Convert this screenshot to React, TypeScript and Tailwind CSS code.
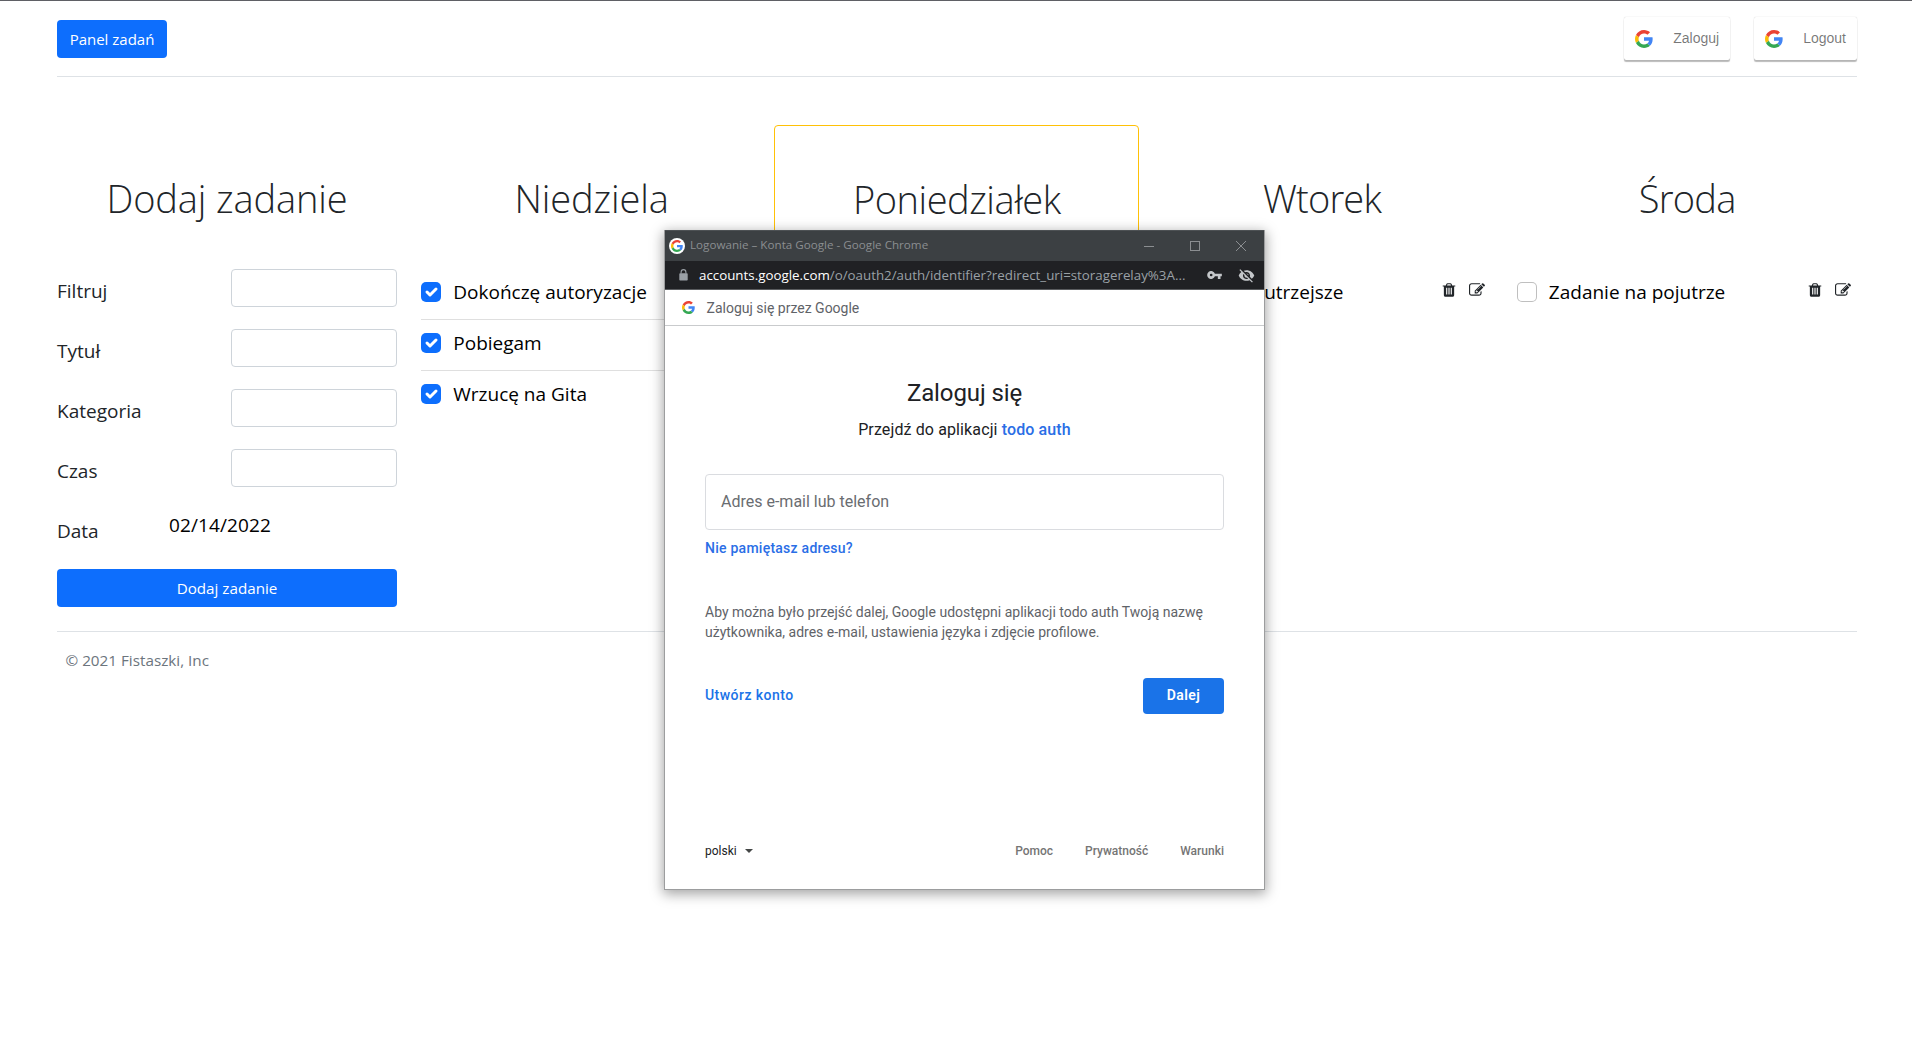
import React from "react";

const TRASH =
  "M704 1376v-704q0-14-9-23t-23-9h-64q-14 0-23 9t-9 23v704q0 14 9 23t23 9h64q14 0 23-9t9-23zm256 0v-704q0-14-9-23t-23-9h-64q-14 0-23 9t-9 23v704q0 14 9 23t23 9h64q14 0 23-9t9-23zm256 0v-704q0-14-9-23t-23-9h-64q-14 0-23 9t-9 23v704q0 14 9 23t23 9h64q14 0 23-9t9-23zm-544-992h448l-48-117q-7-9-17-11h-317q-10 2-17 11zm928 32v64q0 14-9 23t-23 9h-96v948q0 83-47 143.5t-113 60.5h-832q-66 0-113-58.5t-47-141.5v-952h-96q-14 0-23-9t-9-23v-64q0-14 9-23t23-9h309l70-167q15-37 54-63t79-26h320q40 0 79 26t54 63l70 167h309q14 0 23 9t9 23z";
const EDIT =
  "M888 1184l116-116-152-152-116 116v56h96v96h56zm440-720q-16-16-33 1l-350 350q-17 17-1 33t33-1l350-350q17-17 1-33zm80 594v190q0 119-84.5 203.5t-203.5 84.5h-832q-119 0-203.5-84.5t-84.5-203.5v-832q0-119 84.5-203.5t203.5-84.5h832q63 0 117 25 15 7 18 23 3 17-9 29l-49 49q-14 14-32 8-23-6-45-6h-832q-66 0-113 47t-47 113v832q0 66 47 113t113 47h832q66 0 113-47t47-113v-126q0-13 9-22l64-64q15-15 35-7t20 29zm-96-738l288 288-672 672h-288v-288zm444 132l-92 92-288-288 92-92q28-28 68-28t68 28l152 152q28 28 28 68t-28 68z";

function GlyphIcon({ d }: { d: string }) {
  return (
    <svg viewBox="0 0 1792 1792" className="h-4 w-4" fill="#212529">
      <path d={d} />
    </svg>
  );
}

function GoogleG({ className }: { className: string }) {
  return (
    <svg viewBox="0 0 18 18" className={className}>
      <path fill="#EA4335" d="M9 3.48c1.69 0 2.83.73 3.48 1.34l2.54-2.48C13.46.89 11.43 0 9 0 5.48 0 2.44 2.02.96 4.96l2.91 2.26C4.6 5.05 6.62 3.48 9 3.48z" />
      <path fill="#4285F4" d="M17.64 9.2c0-.74-.06-1.28-.19-1.84H9v3.34h4.96c-.1.83-.64 2.08-1.84 2.92l2.84 2.2c1.7-1.57 2.68-3.88 2.68-6.62z" />
      <path fill="#FBBC05" d="M3.88 10.78A5.54 5.54 0 0 1 3.58 9c0-.62.11-1.22.29-1.78L.96 4.96A9.008 9.008 0 0 0 0 9c0 1.45.35 2.82.96 4.04l2.92-2.26z" />
      <path fill="#34A853" d="M9 18c2.43 0 4.47-.8 5.96-2.18l-2.84-2.2c-.76.53-1.78.9-3.12.9-2.38 0-4.4-1.57-5.12-3.74L.97 13.04C2.45 15.98 5.48 18 9 18z" />
    </svg>
  );
}

function GoogleButton({ label }: { label: string }) {
  return (
    <button className="flex h-[43px] items-center rounded-[2px] bg-white pr-[11px] pl-[11px] font-['Liberation_Sans',sans-serif] text-[14px] text-black/54 shadow-[0_2px_1px_0_rgba(0,0,0,0.27),0_0_1px_0_rgba(0,0,0,0.24)]">
      <GoogleG className="mr-[20px] h-[18px] w-[18px]" />
      {label}
    </button>
  );
}

function Task({ label, done, last, actions }: { label: string; done?: boolean; last?: boolean; actions?: boolean }) {
  return (
    <div className={last ? "flex h-[51px] items-start" : "flex h-[51px] items-start border-b border-[#dfdfdf]"}>
      {done ? (
        <span className="mt-[13px] h-5 w-5 shrink-0 rounded-[5px] bg-[#0d6efd]">
          <svg viewBox="0 0 20 20" fill="none" stroke="#fff" strokeWidth="3" strokeLinecap="round" strokeLinejoin="round">
            <path d="M6 10l3 3l6-6" />
          </svg>
        </span>
      ) : (
        <span className="mt-[13px] h-5 w-5 shrink-0 rounded-[5px] border border-black/25 bg-white" />
      )}
      <span className="ml-[12.3px] text-[19px] leading-[47px] whitespace-nowrap text-black">{label}</span>
      {actions && (
        <span className="mt-[13px] mr-[7.2px] ml-auto flex gap-3">
          <GlyphIcon d={TRASH} />
          <GlyphIcon d={EDIT} />
        </span>
      )}
    </div>
  );
}

type ColumnProps = { title: string; width?: string; tracking?: string; highlight?: boolean; children?: React.ReactNode };

function Column({ title, width = "w-[365.2px]", tracking = "", highlight, children }: ColumnProps) {
  const frame = highlight ? "rounded border border-[#ffc107] px-[11px] " : "px-3 ";
  return (
    <section className={"h-[482px] shrink-0 pt-[49px] " + frame + width}>
      <h2 className={"mb-[47px] text-center text-[38px] leading-[48px] font-light text-[#212529] " + tracking}>{title}</h2>
      {children}
    </section>
  );
}

function Popup() {
  return (
    <div className="absolute top-[230px] left-[664px] flex h-[660px] w-[601px] flex-col border border-t-0 border-[#9c9d9e] bg-white shadow-[0_3px_12px_1px_rgba(0,0,0,0.36)]">
      <div className="flex h-[31px] shrink-0 items-center border-t border-[#4d5154] bg-[#3c4043] pr-[18px] pl-1">
        <span className="flex h-4 w-4 items-center justify-center rounded-full bg-white">
          <GoogleG className="h-3 w-3" />
        </span>
        <span className="ml-[5px] pb-0.5 text-[11.65px] text-[#8b8e91]">Logowanie – Konta Google - Google Chrome</span>
        <span className="ml-auto flex items-center gap-[36px]">
          <span className="h-px w-[10px] bg-[#8b8e91]" />
          <span className="h-[10px] w-[10px] border border-[#8b8e91]" />
          <svg viewBox="0 0 10 10" className="h-[10px] w-[10px]" stroke="#8b8e91" strokeWidth="1">
            <path d="M0 0L10 10M10 0L0 10" />
          </svg>
        </span>
      </div>
      <div className="flex h-[29px] shrink-0 items-center border-b border-[#5a5c5f] bg-[#202124] pr-[9px] pl-[13.5px]">
        <svg viewBox="0 0 9 12" className="h-3 w-[9px]">
          <rect x="0.3" y="4.2" width="8.4" height="7.3" rx="0.8" fill="#9aa0a6" />
          <path d="M2.1 4.5V3a2.4 2.4 0 0 1 4.8 0v1.5" fill="none" stroke="#9aa0a6" strokeWidth="1.1" />
        </svg>
        <span className="ml-[11.5px] text-[13.34px] whitespace-nowrap text-[#9aa0a6]">
          <span className="text-white">accounts.google.com</span>
          /o/oauth2/auth/identifier?redirect_uri=storagerelay%3A...
        </span>
        <svg viewBox="0 0 22 12" className="ml-auto h-2 w-[15px]" fill="#c4c7ca">
          <path d="M11.65 4A6 6 0 1 0 11.65 8H16v4h4V8h2V4H11.65zM6 8a2 2 0 1 1 0-4 2 2 0 0 1 0 4z" />
        </svg>
        <svg viewBox="0 0 24 24" className="ml-4 h-[17px] w-[17px]" fill="#c4c7ca">
          <path d="M12 7c2.76 0 5 2.24 5 5 0 .65-.13 1.26-.36 1.83l2.92 2.92c1.51-1.26 2.7-2.89 3.43-4.75-1.73-4.39-6-7.5-11-7.5-1.4 0-2.74.25-3.98.7l2.16 2.16C10.74 7.13 11.35 7 12 7zM2 4.27l2.28 2.28.46.46A11.8 11.8 0 0 0 1 12c1.73 4.39 6 7.5 11 7.5 1.55 0 3.03-.3 4.38-.84l.42.42L19.73 22 21 20.73 3.27 3 2 4.27zM7.53 9.8l1.55 1.55c-.05.21-.08.43-.08.65 0 1.66 1.34 3 3 3 .22 0 .44-.03.65-.08l1.55 1.55c-.67.33-1.41.53-2.2.53-2.76 0-5-2.24-5-5 0-.79.2-1.53.53-2.2zm4.31-.78l3.15 3.15.02-.16c0-1.66-1.34-3-3-3l-.17.01z" />
        </svg>
      </div>
      <div className="flex h-9 shrink-0 items-center border-b border-[#c9cbcd] pl-[16.5px] font-[Roboto,sans-serif] text-[14px] text-[#5f6368]">
        <GoogleG className="mr-[12px] h-[13px] w-[13px]" />
        <span className="pt-px">Zaloguj się przez Google</span>
      </div>
      <div className="flex flex-1 flex-col px-10 pt-[51px] pb-7 font-[Roboto,sans-serif]">
        <h1 className="text-center text-[24px] leading-8 tracking-[-0.1px] text-[#202124]">Zaloguj się</h1>
        <p className="mt-2 text-center text-[16px] leading-[25px] tracking-[0.12px] text-[#202124]">
          Przejdź do aplikacji <span className="font-medium text-[#2a6ee6]">todo auth</span>
        </p>
        <div className="mt-8 flex h-14 items-center rounded border border-[#dadce0] pl-[15px] text-[16px] text-[#6a6d71]">
          Adres e-mail lub telefon
        </div>
        <a className="mt-2 text-[14px] leading-5 font-medium tracking-[0.25px] text-[#2a6ee6]">Nie pamiętasz adresu?</a>
        <p className="mt-11 text-[14px] leading-5 text-[#5f6368]">
          Aby można było przejść dalej, Google udostępni aplikacji todo auth Twoją nazwę użytkownika, adres e-mail, ustawienia języka i zdjęcie profilowe.
        </p>
        <div className="mt-9 flex h-9 items-center justify-between">
          <a className="pb-0.5 text-[14px] font-medium tracking-[0.46px] text-[#1a73e8]">Utwórz konto</a>
          <button className="h-9 w-[81px] rounded bg-[#1a73e8] pb-0.5 text-[14px] font-semibold tracking-[0.4px] text-white">Dalej</button>
        </div>
        <div className="mt-auto flex items-center text-[12px] leading-5 text-[#757575]">
          <span className="text-[#202124]">polski</span>
          <span className="ml-2 h-0 w-0 border-x-4 border-t-4 border-x-transparent border-t-[#444746]" />
          <span className="ml-auto font-medium">Pomoc</span>
          <span className="ml-8 font-medium">Prywatność</span>
          <span className="ml-8 font-medium">Warunki</span>
        </div>
      </div>
    </div>
  );
}

export default function App() {
  return (
    <div className="relative h-[1038px] w-[1912px] overflow-hidden border-t border-[#5f6065] bg-white font-['Open_Sans',sans-serif] text-[#212529]">
      <div className="ml-[57px] w-[1800px]">
        <header className="flex h-[76px] items-start justify-between border-b border-[#dee2e6]">
          <button className="mt-[19px] h-[38px] w-[110px] rounded bg-[#0d6efd] text-[15px] text-white">Panel zadań</button>
          <div className="mt-4 flex gap-6">
            <GoogleButton label="Zaloguj" />
            <GoogleButton label="Logout" />
          </div>
        </header>

        <main className="-mx-3 mt-12 flex">
          <Column title="Dodaj zadanie" width="w-[364px]" tracking="tracking-[-0.12px]">
            {["Filtruj", "Tytuł", "Kategoria", "Czas"].map((name) => (
              <div key={name} className="flex h-[60px] items-start justify-between text-[19px] leading-[45px]">
                <label>{name}</label>
                <input className="h-[38px] w-[166px] rounded border border-[#ced4da] bg-white" />
              </div>
            ))}
            <div className="flex h-[60px] items-start text-[19px] leading-[45px]">
              <label className="w-[112px]">Data</label>
              <span className="leading-[33px] tracking-[0.1px] text-black">02/14/2022</span>
            </div>
            <button className="h-[38px] w-full rounded bg-[#0d6efd] text-[15.2px] text-white">Dodaj zadanie</button>
          </Column>
          <Column title="Niedziela" tracking="tracking-[-0.1px]">
            <Task label="Dokończę autoryzacje" done />
            <Task label="Pobiegam" done />
            <Task label="Wrzucę na Gita" done last />
          </Column>
          <Column title="Poniedziałek" tracking="tracking-[-0.45px]" highlight />
          <Column title="Wtorek" tracking="tracking-[-0.8px]">
            <Task label="Zadanie jutrzejsze" last actions />
          </Column>
          <Column title="Środa" tracking="tracking-[-0.7px]">
            <Task label="Zadanie na pojutrze" last actions />
          </Column>
        </main>

        <footer className="mt-6 border-t border-[#dee2e6] pl-[8.5px] text-[15.25px] leading-[56px] text-[#6c757d]">© 2021 Fistaszki, Inc</footer>
      </div>
      <div className="absolute inset-x-0 -top-px">
        <Popup />
      </div>
    </div>
  );
}
